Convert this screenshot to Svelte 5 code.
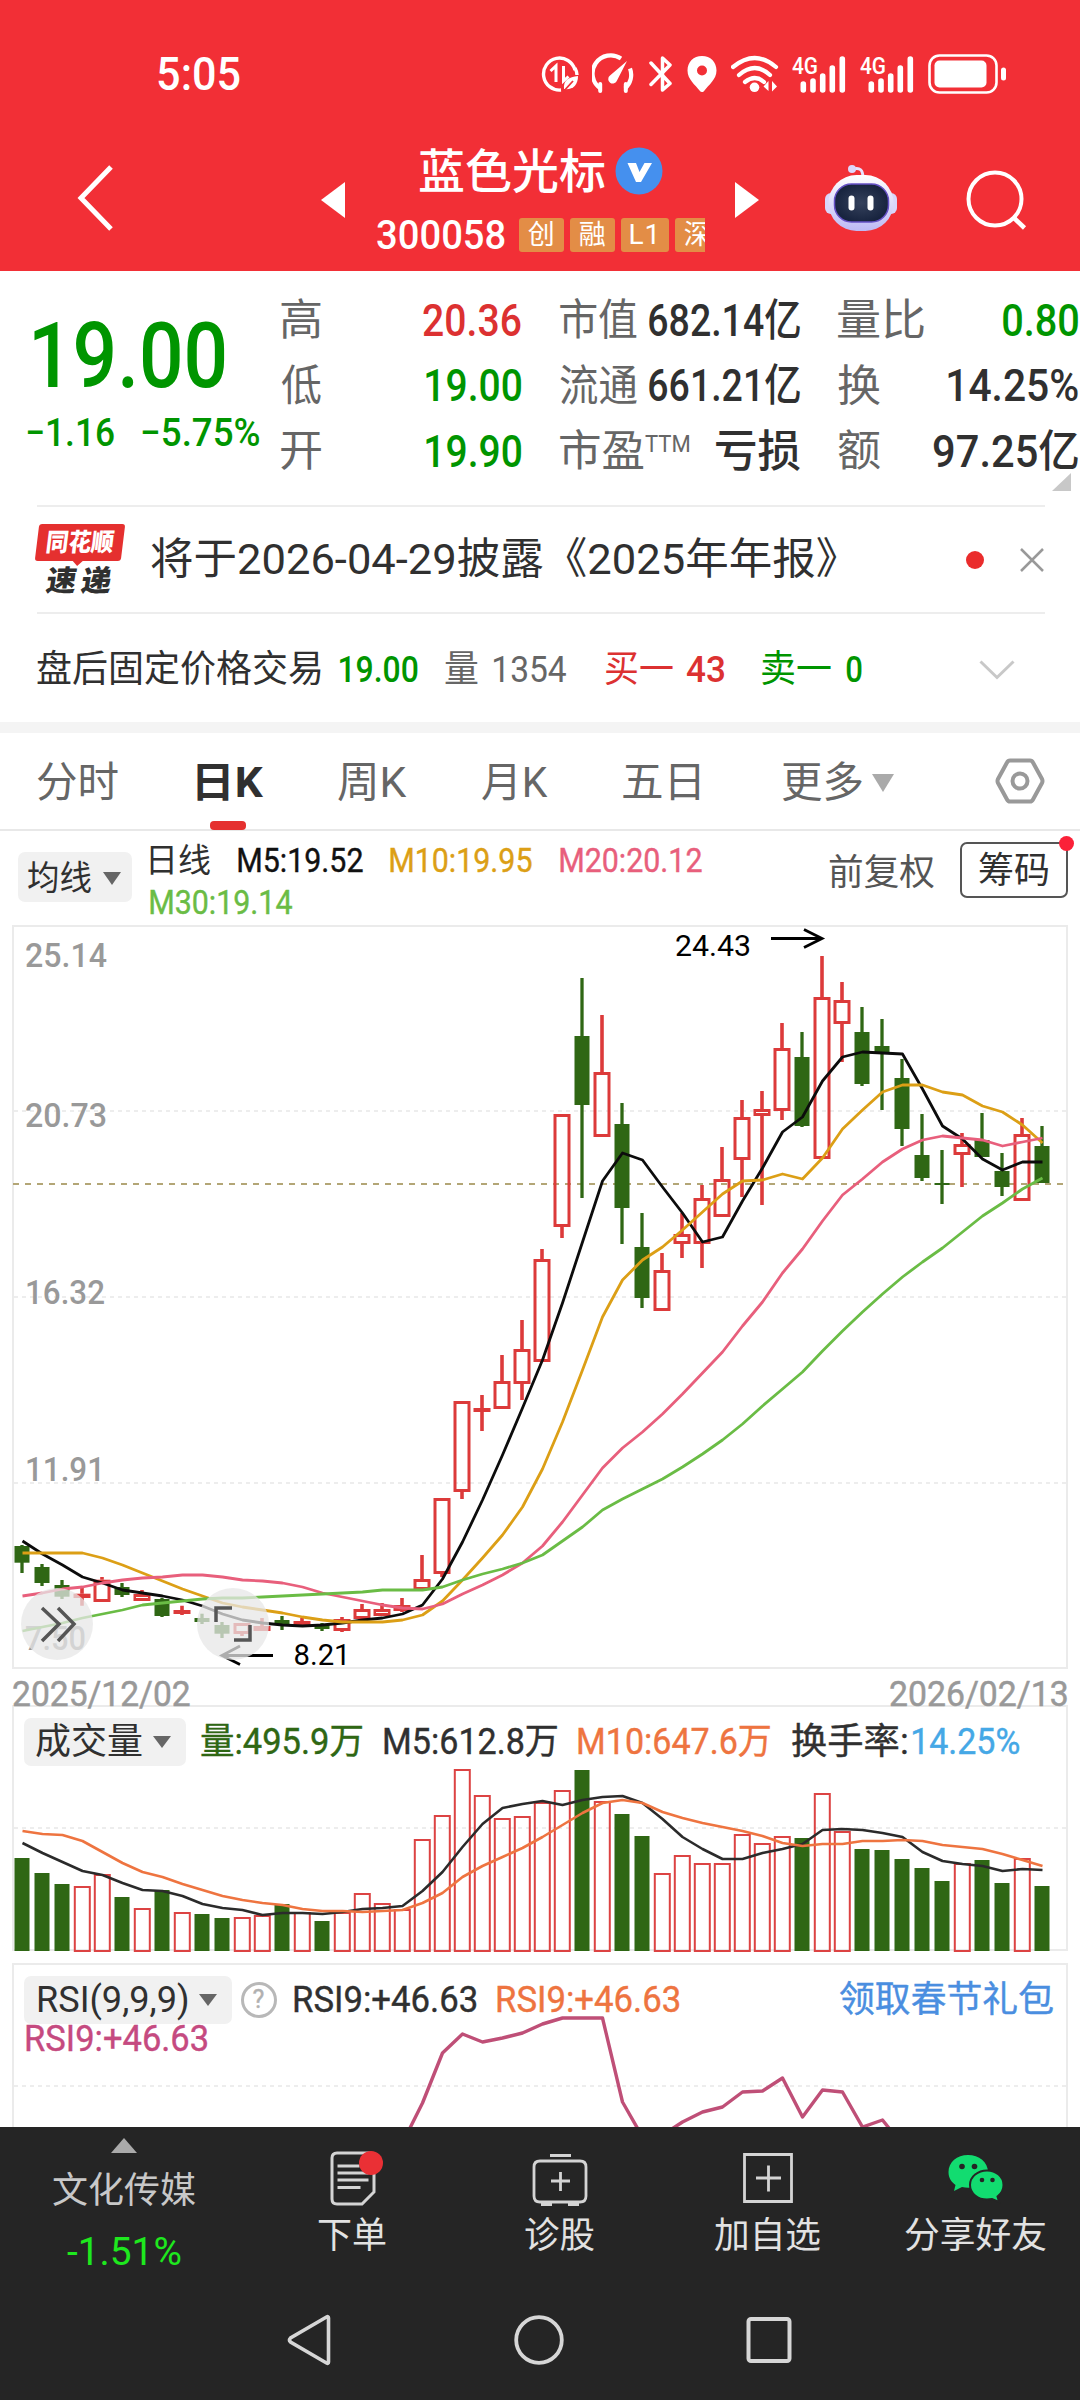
<script lang="ts">
  type Candle = [kind: 'r' | 'g', high: number, top: number, bottom: number, low: number];

  // Measures the ink of a text and stretches it horizontally to the wanted width.
  function fit(node: HTMLElement, width: number) {
    const cs = getComputedStyle(node);
    const ctx = document.createElement('canvas').getContext('2d')!;
    ctx.font = `${cs.fontWeight} ${cs.fontSize} ${cs.fontFamily}`;
    const m = ctx.measureText(node.textContent ?? '');
    const k = width / (m.actualBoundingBoxLeft + m.actualBoundingBoxRight);
    node.style.marginRight = `${width - node.offsetWidth}px`;
    node.style.transform = `translateX(${m.actualBoundingBoxLeft * k}px) scaleX(${k})`;
  }

  const candles: Candle[] = [
    ['g', 1545, 1546, 1562.7, 1573], ['g', 1564, 1567, 1583, 1586], ['g', 1580, 1585, 1596.7, 1599],
    ['r', 1586.7, 1593.7, 1598, 1605.7], ['r', 1577, 1579.7, 1602, 1602], ['g', 1583, 1587, 1595, 1597],
    ['r', 1590, 1594, 1601, 1601], ['g', 1598, 1599, 1616, 1617], ['r', 1605.7, 1610, 1614, 1615],
    ['g', 1613.7, 1618, 1622, 1624], ['g', 1622, 1625, 1633.7, 1638], ['r', 1623, 1623, 1634, 1636],
    ['r', 1618, 1626, 1631, 1631], ['g', 1616, 1620, 1625, 1630], ['r', 1618, 1621, 1625, 1625],
    ['g', 1623, 1625, 1629, 1631], ['r', 1617, 1619, 1631, 1632], ['r', 1604, 1609, 1619, 1619],
    ['r', 1603, 1609, 1616, 1616], ['r', 1598, 1605, 1611, 1612], ['r', 1555, 1579, 1590, 1590],
    ['r', 1498, 1498, 1574, 1577], ['r', 1401, 1401, 1492, 1499], ['r', 1395, 1408, 1412, 1431],
    ['r', 1355, 1381, 1409, 1409], ['r', 1320, 1349, 1384, 1400], ['r', 1249, 1259, 1362, 1362],
    ['r', 1114, 1114, 1227, 1238], ['g', 978, 1036, 1105, 1198], ['r', 1015, 1072, 1137, 1137],
    ['g', 1103, 1124, 1208, 1244], ['g', 1213, 1247, 1298, 1308], ['r', 1253, 1270, 1311, 1311],
    ['r', 1213, 1234, 1244, 1258], ['r', 1185, 1198, 1244, 1268], ['r', 1147, 1179, 1217, 1217],
    ['r', 1100, 1117, 1160, 1197], ['r', 1091, 1109, 1116, 1205], ['r', 1023, 1048, 1111, 1120],
    ['g', 1032, 1057, 1126, 1127], ['r', 956, 997, 1159, 1159], ['r', 982, 1000, 1024, 1062],
    ['g', 1007, 1032, 1084, 1086], ['g', 1019, 1046, 1053, 1110], ['g', 1059, 1078, 1129, 1146],
    ['g', 1114, 1155, 1178, 1181], ['g', 1150, 1183, 1185, 1204], ['r', 1133, 1144, 1155, 1187],
    ['g', 1113, 1140, 1157, 1157], ['g', 1153, 1171, 1187, 1196], ['r', 1118, 1134, 1201, 1201],
    ['g', 1126, 1146, 1183, 1183]
  ];
  const m5 = [1541, 1554, 1565, 1577, 1583, 1590, 1593, 1596, 1600, 1606, 1614, 1620, 1623, 1625, 1626, 1625, 1623, 1620, 1618, 1614, 1605, 1579, 1542, 1500, 1455, 1408, 1360, 1303, 1242, 1181, 1153, 1160, 1187, 1213, 1242, 1237, 1201, 1168, 1132, 1117, 1081, 1057, 1052, 1053, 1054, 1089, 1126, 1139, 1159, 1170, 1162, 1162];
  const m10 = [1553, 1553, 1553, 1553, 1558, 1565, 1573, 1581, 1589, 1596, 1603, 1607, 1610, 1613, 1617, 1620, 1622, 1622, 1622, 1620, 1615, 1601, 1580, 1558, 1535, 1507, 1469, 1422, 1370, 1317, 1280, 1260, 1247, 1230, 1212, 1194, 1181, 1180, 1174, 1179, 1158, 1129, 1110, 1092, 1085, 1085, 1092, 1095, 1106, 1112, 1125, 1143];
  const m20 = [1596, 1593, 1589, 1587, 1583, 1580, 1578, 1577, 1575, 1575, 1577, 1580, 1581, 1583, 1587, 1593, 1597, 1601, 1605, 1608, 1609, 1604, 1594, 1585, 1575, 1563, 1546, 1522, 1495, 1468, 1448, 1432, 1414, 1394, 1373, 1352, 1326, 1302, 1273, 1249, 1221, 1195, 1179, 1162, 1149, 1140, 1136, 1138, 1140, 1146, 1142, 1138];
  const m30 = [1631, 1627, 1623, 1618, 1614, 1610, 1605, 1603, 1601, 1599, 1598, 1598, 1597, 1596, 1595, 1594, 1593, 1592, 1590, 1590, 1590, 1587, 1580, 1574, 1569, 1563, 1555, 1541, 1527, 1510, 1499, 1489, 1479, 1467, 1454, 1440, 1424, 1406, 1389, 1372, 1351, 1331, 1312, 1294, 1277, 1262, 1248, 1232, 1216, 1203, 1189, 1178];
  const volumes = [1858, 1873, 1884, 1886, 1874, 1897, 1908, 1890, 1912, 1914, 1918, 1917, 1915, 1904, 1912, 1921, 1912, 1893, 1903, 1909, 1839, 1815, 1769, 1795, 1818, 1816, 1802, 1790, 1770, 1801, 1814, 1836, 1873, 1855, 1863, 1863, 1834, 1843, 1836, 1838, 1793, 1831, 1849, 1850, 1859, 1868, 1881, 1863, 1860, 1883, 1858, 1886];
  const v5 = [1843, 1853, 1862, 1871, 1875, 1883, 1890, 1891, 1896, 1904, 1908, 1910, 1915, 1913, 1913, 1914, 1912, 1909, 1908, 1906, 1891, 1872, 1847, 1824, 1808, 1804, 1801, 1805, 1800, 1797, 1796, 1803, 1819, 1837, 1849, 1859, 1859, 1853, 1849, 1844, 1830, 1829, 1830, 1833, 1837, 1852, 1861, 1864, 1866, 1871, 1869, 1870];
  const v10 = [1831, 1834, 1835, 1841, 1852, 1863, 1872, 1877, 1884, 1890, 1896, 1900, 1903, 1905, 1909, 1911, 1911, 1912, 1911, 1910, 1903, 1893, 1877, 1866, 1857, 1848, 1837, 1825, 1813, 1803, 1800, 1803, 1812, 1818, 1823, 1827, 1831, 1836, 1843, 1846, 1844, 1844, 1841, 1841, 1840, 1841, 1845, 1847, 1849, 1854, 1860, 1866];
  const rsi = [2143, 2103, 2053, 2034, 2042, 2038, 2033, 2024, 2018, 2018, 2018, 2102, 2137, 2135, 2122, 2112, 2107, 2092, 2091, 2078, 2117, 2090, 2092, 2127, 2120, 2145];

  const cx = (i: number) => 22 + i * 20;
  const line = (ys: number[], from = 0) => ys.map((y, i) => `${22.5 + (i + from) * 20},${y}`).join(' ');

  const stats = [
    [
      { label: '高', lw: 40, value: '20.36', vw: 98, tone: 'up' },
      { label: '低', lw: 40, value: '19.00', vw: 95, tone: 'down' },
      { label: '开', lw: 40, value: '19.90', vw: 95, tone: 'down' }
    ],
    [
      { label: '市值', lw: 77, value: '682.14亿', vw: 151, tone: '' },
      { label: '流通', lw: 77, value: '661.21亿', vw: 151, tone: '' },
      { label: '市盈', lw: 84, sup: 'TTM', value: '亏损', vw: 84, tone: '' }
    ],
    [
      { label: '量比', lw: 86, value: '0.80', vw: 75, tone: 'down' },
      { label: '换', lw: 42, value: '14.25%', vw: 130, tone: '' },
      { label: '额', lw: 42, value: '97.25亿', vw: 144, tone: '' }
    ]
  ];
  const tabs = [
    { name: '分时', w: 81 }, { name: '日K', w: 66, on: true }, { name: '周K', w: 69 },
    { name: '月K', w: 66 }, { name: '五日', w: 76 }
  ];
  const axis = [
    { t: '25.14', y: 967, w: 82 }, { t: '20.73', y: 1127, w: 82 }, { t: '16.32', y: 1304, w: 80 },
    { t: '11.91', y: 1481, w: 80 }, { t: '7.50', y: 1650, w: 61 }
  ];
</script>

{#snippet signal()}
  <svg class="signal" width="55" height="44" viewBox="0 0 55 44">
    <text x="0" y="21.5" font-size="23" font-weight="500" textLength="26" lengthAdjust="spacingAndGlyphs">4G</text>
    <path d="M11.3 32v6M21 29v9M30.7 24v14M40.3 16v22M50.3 7v31" fill="none" stroke="#fff" stroke-width="5.6" stroke-linecap="round" />
  </svg>
{/snippet}

<div class="page">
  <header>
    <div class="status">
      <span class="time" use:fit={82}>5:05</span>
      <div class="icons">
        <svg class="data" width="38" height="44" viewBox="0 0 38 44">
          <path d="M34 18A16 16 0 1 0 20 38M36 23a16 16 0 0 0-2-7" fill="none" stroke="#fff" stroke-width="3.4" />
          <path d="M9.500 19l5.500-5v16M22.500 14v15l5-4.500" fill="none" stroke="#fff" stroke-width="3" />
          <path d="M37 24c-9 1-15 4-14 13 9 1 14-4 14-13z" fill="#fff" /><path d="M22 40l10-11" stroke="#f22f36" stroke-width="1.8" />
        </svg>
        <svg class="gauge" width="42" height="44" viewBox="0 0 42 44">
          <path d="M8.500 36.500A18 18 0 0 1 29 6.500M38 16.500a18 18 0 0 1-5 20" fill="none" stroke="#fff" stroke-width="4.200" />
          <path d="M35 9L25 28.500a4.500 4.500 0 1 1-7-5z" fill="#fff" />
          <path d="M8.200 32v7M33.800 32v7" stroke="#fff" stroke-width="4" stroke-linecap="round" />
        </svg>
        <svg class="bt" width="24" height="44" viewBox="0 0 24 44">
          <path d="M2 11l19 20.500-7.500 6.500V6L21 13 2 32.500" fill="none" stroke="#fff" stroke-width="3.500" stroke-linejoin="round" stroke-linecap="round" />
        </svg>
        <svg class="pin" width="30" height="44" viewBox="0 0 30 44">
          <path fill-rule="evenodd" d="M15 4C6.500 4 .5 10 .5 18.500c0 9 8 14.500 12 20 1.500 2 3.500 2 5 0 4-5.500 12-11 12-20C29.500 10 23.500 4 15 4zm0 9.500a5 5 0 1 1 0 10 5 5 0 0 1 0-10z" fill="#fff" />
        </svg>
        <svg class="wifi" width="48" height="44" viewBox="0 0 48 44">
          <path d="M2 15Q24-3 45 15M8 23Q24 9 39 23M14 30Q24 22 33 30" fill="none" stroke="#fff" stroke-width="4.200" stroke-linecap="round" />
          <circle cx="23.500" cy="35.300" r="4.800" fill="#fff" /><path d="M37.500 29v10l-5-4.500zM41 29l5 5.500-5 5z" fill="#fff" />
        </svg>
        {@render signal()}
        {@render signal()}
        <svg class="battery" width="79" height="44" viewBox="0 0 79 44">
          <rect x="1.500" y="3.500" width="67" height="37" rx="10" fill="none" stroke="#fff" stroke-width="2.600" />
          <rect x="6.500" y="8.500" width="52" height="27" rx="5" fill="#fff" /><rect x="73" y="15.500" width="5" height="13" rx="2.500" fill="#fff" />
        </svg>
      </div>
    </div>
    <nav>
      <svg class="back" width="36" height="66" viewBox="0 0 36 66"><path d="M34 2L4 33l30 31" fill="none" stroke="#fff" stroke-width="5" /></svg>
      <svg width="24" height="36" viewBox="0 0 24 36"><path d="M24 0v36L0 18z" fill="#fff" /></svg>
      <div class="title">
        <div class="name">
          <span use:fit={185}>蓝色光标</span>
          <svg width="48" height="48" viewBox="0 0 48 48"><circle cx="24" cy="24" r="23.500" fill="#4590ee" /><path d="M12.500 16h8.500l3.500 9 5-9H37L26 35h-5z" fill="#fff" /></svg>
        </div>
        <div class="code">
          <span class="num" use:fit={128}>300058</span>
          <div class="tags"><b>创</b><b>融</b><b class="wide">L1</b><b>深</b></div>
        </div>
      </div>
      <svg width="24" height="36" viewBox="0 0 24 36"><path d="M0 0v36l24-18z" fill="#fff" /></svg>
      <svg class="robot" width="72" height="68" viewBox="0 0 72 68">
        <defs>
          <linearGradient id="shell" x2="0" y2="1"><stop offset="0" stop-color="#fff" /><stop offset="1" stop-color="#bdb9f5" /></linearGradient>
          <radialGradient id="face"><stop offset="0" stop-color="#35415c" /><stop offset="1" stop-color="#18243f" /></radialGradient>
        </defs>
        <path d="M28 5c7-2 10 1 10 9" fill="none" stroke="#e8e3ff" stroke-width="3" /><circle cx="27" cy="5" r="4" fill="#ddd6fb" />
        <rect x="0" y="29" width="12" height="21" rx="6" fill="#d9d6fb" /><rect x="60" y="29" width="12" height="21" rx="6" fill="#d9d6fb" />
        <rect x="3.500" y="11" width="65" height="56" rx="28" fill="url(#shell)" />
        <rect x="9.500" y="20" width="54" height="38" rx="17" fill="url(#face)" stroke="#6550c5" stroke-width="1.500" />
        <rect x="23.500" y="31.500" width="6" height="15" rx="3" fill="#fff" /><rect x="42.500" y="31.500" width="6" height="15" rx="3" fill="#fff" />
      </svg>
      <svg width="62" height="62" viewBox="0 0 62 62"><circle cx="29" cy="30" r="26.500" fill="none" stroke="#fff" stroke-width="4" /><path d="M47 48l11.500 11" stroke="#fff" stroke-width="4.500" /></svg>
    </nav>
  </header>

  <section class="quote">
    <div class="last">
      <div class="price"><span use:fit={191}>19.00</span></div>
      <div class="change"><span use:fit={87}>−1.16</span><span use:fit={117}>−5.75%</span></div>
    </div>
    {#each stats as col}
      <div class="col">
        {#each col as s}
          <div class="stat">
            <span class="label"><span class="t" use:fit={s.lw}>{s.label}</span>{#if s.sup}<span class="sup t" use:fit={44}>{s.sup}</span>{/if}</span>
            <span class="value t {s.tone}" class:loss={s.value === '亏损'} use:fit={s.vw}>{s.value}</span>
          </div>
        {/each}
      </div>
    {/each}
    <svg class="corner" width="19" height="18" viewBox="0 0 19 18"><path d="M19 0v18H0z" fill="#c8c8c8" /></svg>
  </section>

  <section class="news">
    <div class="logo">
      <div class="brand"><span use:fit={67}>同花顺</span></div>
      <div class="sub"><span use:fit={30}>速</span><span use:fit={30}>递</span></div>
    </div>
    <span class="headline" use:fit={686}>将于2026-04-29披露《2025年年报》</span>
    <i class="dot"></i>
    <svg width="24" height="24" viewBox="0 0 24 24"><path d="M1 1l22 22M23 1L1 23" stroke="#999" stroke-width="2.500" /></svg>
  </section>

  <section class="fixed">
    <span class="c1" use:fit={284}>盘后固定价格交易</span>
    <span class="num down" use:fit={78}>19.00</span>
    <span class="grey" use:fit={33}>量</span>
    <span class="grey" use:fit={72}>1354</span>
    <span class="up" use:fit={68}>买一</span>
    <span class="num up" use:fit={37}>43</span>
    <span class="down" use:fit={69}>卖一</span>
    <span class="num down" use:fit={16}>0</span>
    <svg width="36" height="20" viewBox="0 0 36 20"><path d="M1.500 1.500L18 17.500l16.500-16" fill="none" stroke="#c8c8c8" stroke-width="3" /></svg>
  </section>

  <section class="tabs">
    {#each tabs as tab}
      <div class="tab" class:on={tab.on}><span use:fit={tab.w}>{tab.name}</span></div>
    {/each}
    <div class="tab more"><span use:fit={80}>更多</span><svg width="22" height="18" viewBox="0 0 22 18"><path d="M0 0h22L11 18z" fill="#aaa" /></svg></div>
    <svg width="50" height="46" viewBox="0 0 50 46"><path d="M15 2.500h20q2 0 3 2L47 21q1 2 0 4l-9 16.500q-1 2-3 2H15q-2 0-3-2L3 25q-1-2 0-4l9-16.500q1-2 3-2z" fill="none" stroke="#999" stroke-width="4" /><circle cx="25" cy="23" r="7.500" fill="none" stroke="#999" stroke-width="4" /></svg>
  </section>

  <section class="averages">
    <div class="pick"><span use:fit={63}>均线</span><svg width="18" height="13" viewBox="0 0 18 13"><path d="M0 0h18L9 13z" fill="#666" /></svg></div>
    <div class="legend">
      <div class="row"><span use:fit={60}>日线</span><span class="black" use:fit={125}>M5:19.52</span><span class="amber" use:fit={142}>M10:19.95</span><span class="pink" use:fit={142}>M20:20.12</span></div>
      <div class="row"><span class="lime" use:fit={142}>M30:19.14</span></div>
    </div>
    <span class="adjust" use:fit={105}>前复权</span>
    <div class="chips"><span use:fit={69}>筹码</span><i></i></div>
  </section>

  <svg class="kline" width="1080" height="744" viewBox="0 925 1080 744">
    <rect x="13" y="926" width="1054" height="742" fill="none" stroke="#ebebeb" stroke-width="2" />
    <path d="M14 1111H1066M14 1297H1066M14 1483H1066" stroke="#e8e8e8" stroke-width="1.500" stroke-dasharray="4 4" />
    <path d="M13 1184H1066" stroke="#b3a676" stroke-width="1.800" stroke-dasharray="6 6" />
    {#each axis as a}
      <text x="25" y={a.y} font-size="34" font-weight="500" fill="#999" textLength={a.w} lengthAdjust="spacingAndGlyphs">{a.t}</text>
    {/each}
    {#each candles as [kind, high, top, bottom, low], i}
      {#if kind === 'g'}
        <path d="M{cx(i)} {high}V{low}" stroke="#2f6714" stroke-width="3.300" />
        <rect x={cx(i) - 7.5} y={top} width="15" height={bottom - top} fill="#2f6714" />
      {:else}
        <path d="M{cx(i)} {high}V{top}M{cx(i)} {bottom}V{low}" stroke="#dc3a3a" stroke-width="3.600" />
        <rect x={cx(i) - 7} y={top + 1.5} width="14" height={Math.max(bottom - top - 3, 0.6)} fill="none" stroke="#dc3a3a" stroke-width="3" />
      {/if}
    {/each}
    <g fill="none" stroke-width="2.800" stroke-linejoin="round">
      <polyline points={line(m5)} stroke="#0c0c0c" />
      <polyline points={line(m10)} stroke="#dc9f16" />
      <polyline points={line(m20)} stroke="#e85f7c" />
      <polyline points={line(m30)} stroke="#6abc45" />
    </g>
    <text x="675" y="955.500" font-size="30" fill="#000" textLength="76" lengthAdjust="spacingAndGlyphs">24.43</text>
    <text x="293.500" y="1664.500" font-size="29.500" fill="#000" textLength="57" lengthAdjust="spacingAndGlyphs">8.21</text>
    <path d="M771 938.500H822M804 929.500l18 9-18 9M273 1655.500H222M240 1646l-18 9.500 18 9" fill="none" stroke="#000" stroke-width="2.800" />
    <circle cx="57" cy="1624" r="36" fill="#e7e7e7" opacity=".75" />
    <circle cx="233" cy="1624" r="36" fill="#e7e7e7" opacity=".75" />
    <path d="M42 1608l17 16-17 17M58 1608l16 16-16 17" fill="none" stroke="#555" stroke-width="3.500" />
    <path d="M216 1622v-14h16M250 1625v15h-16" fill="none" stroke="#555" stroke-width="3.500" />
  </svg>

  <div class="dates"><span use:fit={177}>2025/12/02</span><span use:fit={177}>2026/02/13</span></div>

  <section class="volume">
    <svg width="1080" height="248" viewBox="0 1705 1080 248">
      <path d="M13 1950V1706H1067V1950z" fill="none" stroke="#ebebeb" stroke-width="2" />
      <path d="M14 1828H1066" stroke="#e8e8e8" stroke-width="1.500" stroke-dasharray="4 4" />
      {#each volumes as top, i}
        {#if candles[i][0] === 'g'}
          <rect x={cx(i) - 7.5} y={top} width="15" height={1951 - top} fill="#2f6714" />
        {:else}
          <rect x={cx(i) - 7.2} y={top + 1} width="15" height={1950 - top} fill="none" stroke="#dc4343" stroke-width="2" />
        {/if}
      {/each}
      <g fill="none" stroke-width="2.600" stroke-linejoin="round">
        <polyline points={line(v5)} stroke="#2b2b2b" />
        <polyline points={line(v10)} stroke="#ee7440" />
      </g>
    </svg>
    <div class="head">
      <div class="pick"><span use:fit={106}>成交量</span><svg width="18" height="12" viewBox="0 0 18 12"><path d="M0 0h18L9 12z" fill="#666" /></svg></div>
      <span class="forest" use:fit={161}>量:495.9万</span>
      <span use:fit={173}>M5:612.8万</span>
      <span class="orange" use:fit={192}>M10:647.6万</span>
      <span use:fit={115}>换手率:</span>
      <span class="sky" use:fit={106}>14.25%</span>
    </div>
  </section>

  <section class="rsi">
    <svg width="1080" height="164" viewBox="0 1963 1080 164">
      <path d="M13 2130V1964H1067V2130" fill="none" stroke="#ebebeb" stroke-width="2" />
      <path d="M14 2086H1066" stroke="#e8e8e8" stroke-width="1.500" stroke-dasharray="4 4" />
      <polyline points={line(rsi, 19)} fill="none" stroke="#bf4f77" stroke-width="3.400" stroke-linejoin="round" />
    </svg>
    <div>
      <div class="head">
        <div class="pick"><span use:fit={149}>RSI(9,9,9)</span><svg width="18" height="12" viewBox="0 0 18 12"><path d="M0 0h18L9 12z" fill="#666" /></svg></div>
        <span class="help">?</span>
        <span use:fit={182}>RSI9:+46.63</span>
        <span class="orange" use:fit={182}>RSI9:+46.63</span>
        <span class="link" use:fit={213}>领取春节礼包</span>
      </div>
      <div class="second"><span use:fit={181}>RSI9:+46.63</span></div>
    </div>
  </section>

  <footer>
    <div class="actions">
      <div class="item sector">
        <svg width="26" height="15" viewBox="0 0 26 15"><path d="M13 0l13 15H0z" fill="#aaa" /></svg>
        <span use:fit={142}>文化传媒</span>
        <span class="pct" use:fit={114}>-1.51%</span>
      </div>
      <div class="item">
        <svg class="order" width="60" height="60" viewBox="0 0 60 60">
          <path d="M12 5h32q5 0 5 5v34l-12 12H12q-5 0-5-5V10q0-5 5-5z" fill="none" stroke="#d4d4d4" stroke-width="3" />
          <path d="M12.500 18h22M12.500 25h31M12.500 32h31M12.500 39.500h23" stroke="#d4d4d4" stroke-width="3" /><circle cx="46" cy="15" r="12" fill="#ea3035" />
        </svg>
        <span use:fit={68}>下单</span>
      </div>
      <div class="item">
        <svg width="60" height="60" viewBox="0 0 60 60">
          <path d="M20 7.500h21M10 13h40q6 0 6 6v29q0 6-6 6H10q-6 0-6-6V19q0-6 6-6zM11 56.500h11M38 56.500h11M21 33h19M30.500 24v19" fill="none" stroke="#d4d4d4" stroke-width="2.800" />
        </svg>
        <span use:fit={69}>诊股</span>
      </div>
      <div class="item">
        <svg width="60" height="60" viewBox="0 0 60 60"><path d="M6.500 6.500h47v47h-47zM18 30h25M30.500 17.500v26" fill="none" stroke="#d4d4d4" stroke-width="2.800" /></svg>
        <span use:fit={105}>加自选</span>
      </div>
      <div class="item">
        <svg width="60" height="60" viewBox="0 0 60 60">
          <path d="M22 7C11 7 2.500 14 2.500 24c0 6 3 10 7 13L8 43l8-4c12 3 26-3 26-15C42 14 33 7 22 7z" fill="#12dc70" />
          <path d="M41 22.500c-9 0-17 6-17 14.500s8 14.500 17 14.500l5-.5 7 3-1.500-5.500c4-3 6-7 6-11.500 0-8.500-7.500-14.500-16.500-14.500z" fill="#12dc70" stroke="#252525" stroke-width="2" />
          <circle cx="16" cy="18.500" r="2.800" fill="#252525" /><circle cx="28.500" cy="18.500" r="2.800" fill="#252525" /><circle cx="36" cy="32" r="2.300" fill="#252525" /><circle cx="46.500" cy="32" r="2.300" fill="#252525" />
        </svg>
        <span use:fit={141}>分享好友</span>
      </div>
    </div>
    <div class="system">
      <svg width="44" height="52" viewBox="0 0 44 52"><path d="M41.500 4v44q0 2-2 1L3.500 28q-2-2 0-4l36-21q2-1 2 1z" fill="none" stroke="#d6d6d6" stroke-width="3.600" /></svg>
      <svg width="52" height="52" viewBox="0 0 52 52"><circle cx="26" cy="26" r="22.800" fill="none" stroke="#d6d6d6" stroke-width="3.800" /></svg>
      <svg width="46" height="48" viewBox="0 0 46 48"><rect x="2.500" y="3" width="41" height="42" rx="2.500" fill="none" stroke="#d6d6d6" stroke-width="4" /></svg>
    </div>
  </footer>
</div>

<style>
  :global(body) { margin: 0; background: #fff; }
  .page {
    width: 1080px; height: 2400px; overflow: hidden; background: #fff; color: #303030;
    font-family: Roboto, 'Noto Sans CJK SC', sans-serif; font-size: 36px; line-height: 1;
    display: flex; flex-direction: column;
  }
  .page > * { flex: none; }
  * { box-sizing: border-box; }
  svg { display: block; flex: none; }
  span { display: inline-block; flex: none; white-space: nowrap; transform-origin: left center; }
  .up { color: #dc3131; }
  .down { color: #009500; }
  .grey { color: #666; }
  .num { font-weight: 500; }

  header { height: 271px; background: #f22f36; color: #fff; }
  .status { height: 148px; padding: 0 73px 0 158px; display: flex; align-items: center; justify-content: space-between; }
  .time { font-size: 46px; font-weight: 500; }
  .icons { display: flex; align-items: center; }
  .icons text { fill: #fff; }
  .gauge { margin-left: 13px; }
  .bt { margin-left: 15px; }
  .pin { margin-left: 14px; }
  .wifi { margin-left: 14px; }
  .signal { margin-left: 13px; }
  .battery { margin-left: 13px; }
  nav { height: 101px; display: grid; grid-template-columns: 244px 24px 390px 90px 141px 62px; padding-left: 77px; align-items: center; }
  .back { margin-top: -5px; }
  .title { align-self: start; }
  .name { height: 46px; padding-left: 75px; display: flex; gap: 10px; align-items: center; font-size: 47px; font-weight: 500; }
  .code { height: 34px; margin-top: 24px; padding-left: 32px; display: flex; gap: 14px; align-items: center; font-size: 41px; }
  .tags { display: flex; gap: 6px; width: 186px; overflow: hidden; }
  .tags b { flex: none; width: 45px; height: 34px; border-radius: 3px; background: #e38d46; font-size: 27px; font-weight: 400; line-height: 34px; text-align: center; }
  .tags .wide { width: 48px; letter-spacing: 1px; font-size: 28px; }
  .robot { margin-top: -5px; }

  .quote { height: 234px; display: grid; grid-template-columns: 281px 279px 278px 242px; position: relative; }
  .last { padding-top: 36px; color: #009500; font-weight: 500; }
  .price { padding-left: 34px; font-size: 91px; line-height: 99px; height: 97px; }
  .change { padding-left: 27px; height: 58px; display: flex; align-items: center; gap: 28px; font-size: 39px; }
  .col { padding-top: 17px; width: 240px; }
  .stat { height: 65.5px; display: flex; justify-content: space-between; align-items: center; }
  .label { color: #666; font-size: 43px; display: flex; }
  .sup { font-size: 24px; margin-left: 1px; padding-top: 2px; }
  .value { font-size: 44px; font-weight: 500; }
  .loss { font-weight: 500; }
  .corner { position: absolute; right: 9px; bottom: 14px; }

  .news { margin: 0 35px 0 37px; height: 109px; border-top: 2px solid #ededed; border-bottom: 2px solid #ededed; display: grid; grid-template-columns: 114px 815px 54px 24px; align-items: center; }
  .logo { width: 88px; height: 72px; }
  .brand { position: relative; height: 37px; background: #e5302f; border-radius: 3px; transform: skewX(-7deg); color: #fff; font-weight: 900; font-size: 25px; line-height: 37px; padding-left: 10px; width: 86px; }
  .brand::after { content: ''; position: absolute; left: 37px; top: 36px; border: 6px solid transparent; border-top-color: #e5302f; border-bottom: 0; }
  .sub { display: flex; gap: 5px; padding: 6px 0 0 10px; transform: skewX(-9deg); font-weight: 900; font-size: 29px; }
  .headline { font-size: 43px; }
  .dot { width: 18px; height: 18px; border-radius: 50%; background: #ea2c2c; }
  .fixed { height: 108px; padding: 3px 0 0 37px; display: grid; grid-template-columns: 303px 105px 49px 111px 82px 75px 84px 133px 36px; align-items: center; font-size: 37px; }

  .tabs { height: 109px; border-top: 11px solid #f4f4f4; border-bottom: 2px solid #e8e8e8; padding-left: 37px; display: grid; grid-template-columns: 160px 141px 144px 141px 159px 213px 50px; align-items: center; color: #666; font-size: 42px; }
  .tab { height: 96px; padding-top: 4px; display: flex; align-items: center; position: relative; }
  .on { color: #303030; font-weight: 700; }
  .on::after { content: ''; position: absolute; left: 13px; bottom: -1px; width: 36px; height: 9px; border-radius: 4px; background: #e5302f; }
  .more { gap: 10px; }

  .averages { height: 94px; padding-left: 18px; display: grid; grid-template-columns: 132px 679px 131px 108px; }
  .pick { background: #f1f1f1; border-radius: 7px; display: flex; align-items: center; }
  .averages .pick { width: 114px; height: 50px; margin-top: 21px; padding: 2px 0 0 10px; gap: 12px; font-size: 34px; }
  .legend { padding-top: 8px; font-size: 33px; }
  .row { height: 42px; display: flex; align-items: center; gap: 27.5px; }
  .lime { color: #6abc45; }
  .black { color: #111; }
  .amber { color: #dc9f16; }
  .pink { color: #e85f7c; }
  .black, .amber, .pink, .lime { -webkit-text-stroke: 0.4px currentColor; }
  .adjust { margin-top: 24px; color: #555; }
  .chips { position: relative; width: 108px; height: 56px; margin-top: 11px; border: 2px solid #555; border-radius: 7px; padding: 2px 0 0 17px; display: flex; align-items: center; }
  .chips i { position: absolute; right: -8px; top: -8px; width: 15px; height: 15px; border-radius: 50%; background: #fb2138; }

  .kline { overflow: visible; }
  .dates { height: 36px; padding: 8px 13px 0; display: flex; justify-content: space-between; color: #999; font-size: 35px; }
  .dates span { -webkit-text-stroke: 0.5px currentColor; }
  .volume { height: 258px; display: grid; }
  .volume > *, .rsi > * { grid-area: 1 / 1; }
  .head { display: flex; align-items: center; font-size: 36px; }
  .head > span { -webkit-text-stroke: 0.4px currentColor; }
  .head .pick { height: 48px; }
  .volume .head { height: 73px; padding-left: 24px; gap: 21.7px; }
  .volume .head .pick { width: 162px; padding-left: 12px; gap: 11px; margin-right: -7px; }
  .volume .head .sky { margin-left: -15px; }
  .forest { color: #2f6714; }
  .orange { color: #ee7440; }
  .sky { color: #45a8e6; }
  .rsi { height: 164px; overflow: hidden; display: grid; }
  .rsi .head { height: 73px; padding-left: 24px; gap: 20.5px; }
  .rsi .head .pick { width: 208px; padding-left: 14px; gap: 12px; margin-right: -12px; }
  .head > .help { width: 36px; height: 36px; margin-right: -3px; border: 3px solid #b8b8b8; border-radius: 50%; font-size: 25px; line-height: 30px; text-align: center; color: #b0b0b0; }
  .link { color: #4a8ee0; margin-left: 141px; }
  .second { padding: 0 0 0 26px; height: 6px; display: flex; align-items: center; color: #c54a80; font-size: 36px; }
  .second span { -webkit-text-stroke: 0.4px currentColor; }

  footer { height: 273px; background: #252525; color: #e2e2e2; }
  .actions { height: 153px; display: grid; grid-template-columns: 248px 208px 207px 209px 208px; }
  .item { display: flex; flex-direction: column; align-items: center; padding-top: 21px; }
  .item span { margin-top: 10px; }
  .order { margin-left: 5px; }
  .sector { padding-top: 11px; color: #c8c8c8; }
  .sector span { margin-top: 20px; }
  .sector .pct { margin-top: 24px; color: #1ee81e; font-size: 38px; }
  .system { height: 120px; padding: 0 288px 0 287px; display: flex; justify-content: space-between; align-items: center; }
</style>
